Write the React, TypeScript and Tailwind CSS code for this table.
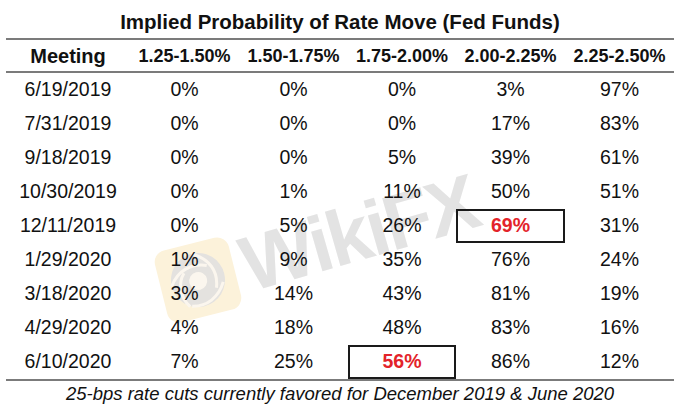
import React from "react";

const rows: string[][] = [
  ["6/19/2019", "0%", "0%", "0%", "3%", "97%"],
  ["7/31/2019", "0%", "0%", "0%", "17%", "83%"],
  ["9/18/2019", "0%", "0%", "5%", "39%", "61%"],
  ["10/30/2019", "0%", "1%", "11%", "50%", "51%"],
  ["12/11/2019", "0%", "5%", "26%", "69%", "31%"],
  ["1/29/2020", "1%", "9%", "35%", "76%", "24%"],
  ["3/18/2020", "3%", "14%", "43%", "81%", "19%"],
  ["4/29/2020", "4%", "18%", "48%", "83%", "16%"],
  ["6/10/2020", "7%", "25%", "56%", "86%", "12%"],
];

const headers = ["1.25-1.50%", "1.50-1.75%", "1.75-2.00%", "2.00-2.25%", "2.25-2.50%"];

function isBoxed(r: number, c: number) {
  return (r === 4 && c === 4) || (r === 8 && c === 3);
}

function Watermark() {
  return (
    <svg className="absolute inset-0 pointer-events-none" width="680" height="413" viewBox="0 0 680 413">
      <g transform="rotate(-14 198 280)">
        <rect x="160" y="243" width="76" height="74" rx="12" fill="#fcf2da" />
        <circle cx="198" cy="280" r="27" fill="#e4e2df" />
        <path d="M198 253 C214 262 220 276 214 292" stroke="#fbf6ee" strokeWidth="3" fill="none" />
        <path d="M171 280 C180 266 196 262 210 268" stroke="#fbf6ee" strokeWidth="3" fill="none" />
        <path d="M184 304 C176 292 178 278 186 270" stroke="#fbf6ee" strokeWidth="3" fill="none" />
        <path d="M222 288 C214 302 200 308 186 304" stroke="#fbf6ee" strokeWidth="3" fill="none" />
        <circle cx="198" cy="281" r="9" fill="#fbf6ee" />
      </g>
      <text
        x="250"
        y="292"
        transform="rotate(-16 250 292)"
        fontFamily="'Liberation Sans', Arial, sans-serif"
        fontWeight="700"
        fontSize="78"
        letterSpacing="-3"
        fill="#e3e3e3"
      >
        WikiFX
      </text>
    </svg>
  );
}

export default function App() {
  const grid = "grid grid-cols-[124px_109px_109px_108px_109px_109px] ml-[6px] w-[668px]";
  return (
    <div className="relative w-[680px] h-[413px] bg-white overflow-hidden text-[#111] font-['Liberation_Sans',Arial,sans-serif]">
      <Watermark />
      <div className="relative z-10 flex flex-col">
        <div className="h-[38px] pt-[10px] text-center font-bold text-[20.5px] leading-[23px]">
          Implied Probability of Rate Move (Fed Funds)
        </div>
        <div className="ml-[6px] w-[668px] h-[2px] bg-[#7b7b7b]" />
        <div className={`${grid} h-[31px] items-center font-bold`}>
          <div className="text-center text-[20px] leading-none">Meeting</div>
          {headers.map((h) => (
            <div key={h} className="text-center text-[18px] leading-none">
              {h}
            </div>
          ))}
        </div>
        <div className="ml-[6px] w-[668px] h-[2px] bg-[#7b7b7b]" />
        {rows.map((row, r) => (
          <div key={row[0]} className={`${grid} h-[34px]`}>
            {row.map((cell, c) =>
              isBoxed(r, c) ? (
                <div
                  key={c}
                  className="flex items-center justify-center border-2 border-[#1a1a1a] text-[19.5px] font-bold text-[#e3232a] leading-none"
                >
                  {cell}
                </div>
              ) : (
                <div key={c} className="flex items-center justify-center text-[19.5px] leading-none">
                  {cell}
                </div>
              )
            )}
          </div>
        ))}
        <div className="ml-[6px] w-[668px] h-[2px] bg-[#7b7b7b]" />
        <div className="h-[32px] pt-[2px] text-center italic text-[18.5px] leading-[22px]">
          25-bps rate cuts currently favored for December 2019 &amp; June 2020
        </div>
      </div>
    </div>
  );
}
